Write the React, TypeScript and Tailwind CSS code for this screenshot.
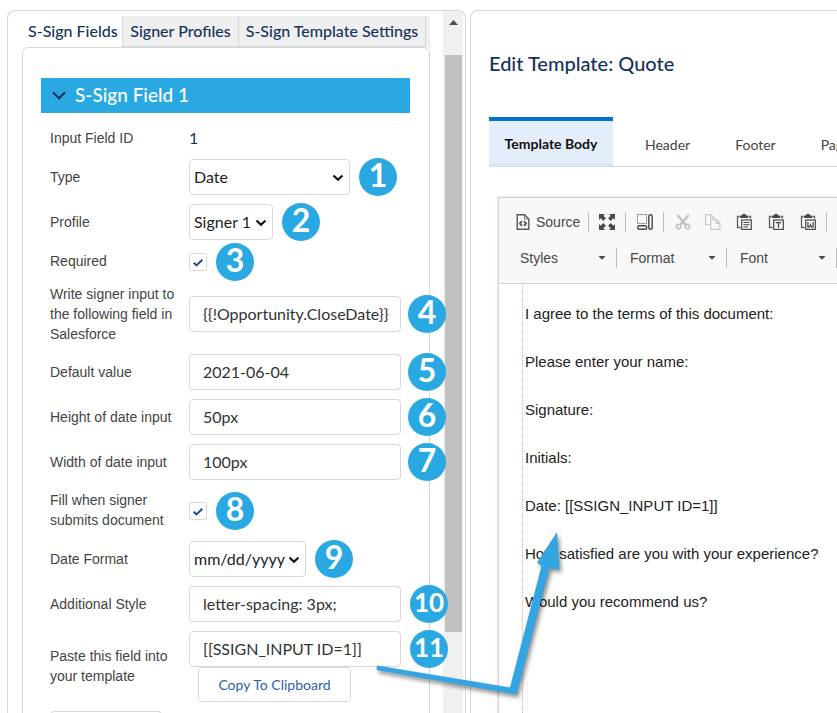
import type { ReactNode } from "react";

const labelFont = "font-['Liberation_Sans',Arial,sans-serif]";

const templateLines = [
  "I agree to the terms of this document:",
  "Please enter your name:",
  "Signature:",
  "Initials:",
  "Date: [[SSIGN_INPUT ID=1]]",
  "How satisfied are you with your experience?",
  "Would you recommend us?",
];

interface RowProps {
  label: string;
  htmlFor?: string;
  className?: string;
  children: ReactNode;
}

function Row({ label, htmlFor, className = "h-9", children }: RowProps) {
  return (
    <div className={`flex items-center ${className}`}>
      <label htmlFor={htmlFor} className={`w-[139px] shrink-0 pb-px pr-2 text-sm leading-5 text-[#444] ${labelFont}`}>
        {label}
      </label>
      {children}
    </div>
  );
}

function Badge({ n, near = false }: { n: number; near?: boolean }) {
  return (
    <span
      className={`absolute left-full top-1/2 z-10 flex size-[38px] -translate-y-1/2 items-center justify-center rounded-full bg-[#29a8e2] pb-1 font-bold leading-none text-white ${
        near ? "ml-[7px]" : "ml-[9px]"
      } ${n > 9 ? "text-[26px]" : "text-[32px]"}`}
    >
      {n}
    </span>
  );
}

function TextField({ id, value, badge }: { id: string; value: string; badge: number }) {
  return (
    <div className="relative w-[212px]">
      <input
        id={id}
        type="text"
        defaultValue={value}
        className="h-9 w-full rounded border border-[#d8d8d8] bg-white pb-0.5 pl-[13px] pr-2 text-base text-[#333] outline-none"
      />
      <Badge n={badge} near={badge < 10} />
    </div>
  );
}

function SelectField({ id, value, badge, width }: { id: string; value: string; badge: number; width: string }) {
  return (
    <div className={`relative ${width}`}>
      <select
        id={id}
        className="h-9 w-full appearance-none rounded border border-[#d8d8d8] bg-white pl-1 text-base text-[#222] outline-none"
      >
        <option>{value}</option>
      </select>
      <svg viewBox="0 0 12 8" className="pointer-events-none absolute right-[6px] top-[15px] h-2 w-3">
        <path d="M1.5 1.5 6 5.7l4.500-4.200" fill="none" stroke="#111" strokeWidth="2.200" />
      </svg>
      <Badge n={badge} />
    </div>
  );
}

function CheckField({ id, badge }: { id: string; badge: number }) {
  return (
    <div className="relative size-[18px]">
      <input
        id={id}
        type="checkbox"
        defaultChecked
        className="block size-[18px] appearance-none rounded-xs border border-[#d8d8d8] bg-white"
      />
      <svg viewBox="0 0 18 18" className="pointer-events-none absolute inset-0">
        <path d="m4.800 9.700 2.700 2.700 5.800-5.600" fill="none" stroke="#1b4f9c" strokeWidth="2.100" />
      </svg>
      <Badge n={badge} />
    </div>
  );
}

function Separator() {
  return <span className="h-5 w-px shrink-0 bg-[#bcbcbc]" />;
}

function ToolButton({ label, className, children }: { label: string; className: string; children: ReactNode }) {
  return (
    <button aria-label={label} className={`flex shrink-0 justify-center ${className}`}>
      <svg viewBox="0 0 16 16" className="size-4" fill="none" stroke="#484848">
        {children}
      </svg>
    </button>
  );
}

function Clipboard() {
  return (
    <>
      <path d="M3.500 2.500h-2v11h3M12.500 2.500h2v2" stroke="#5a5a5a" strokeWidth="1.300" />
      <path d="M4 1.500h2.200V0h3.600v1.500H12V4H4z" fill="#484848" stroke="none" />
      <rect x="5.700" y="6" width="9.600" height="9.400" fill="#f8f8f8" strokeWidth="1.200" />
    </>
  );
}

function Combo({ label }: { label: string }) {
  return (
    <button className="flex w-[109px] shrink-0 items-center justify-between pl-[13px] pr-[10px] text-sm text-[#484848]">
      {label}
      <svg viewBox="0 0 8 4" className="h-1 w-2">
        <path d="M.5 0h7L4 3.800z" fill="#484848" />
      </svg>
    </button>
  );
}

function Toolbar() {
  return (
    <div className="flex flex-col gap-4 border-b border-[#d1d1d1] bg-[#f8f8f8] pb-[15px] pt-[14px]">
      <div className="flex h-5 items-center">
        <button className="flex w-[89px] shrink-0 items-center gap-[6px] pl-[17px] text-sm text-[#484848]">
          <svg viewBox="0 0 14 16" className="h-4 w-[14px]" fill="none" stroke="#585858">
            <path d="M1.200.700h7.300L12.800 5v10.300H1.200z" strokeWidth="1.400" />
            <path d="M8.500.700V5h4.300" strokeWidth=".8" />
            <path d="M6 7.200 3.900 9.500 6 11.800M8 7.200l2.100 2.300L8 11.800" strokeWidth="1.900" />
          </svg>
          Source
        </button>
        <Separator />
        <ToolButton label="Maximize" className="w-9">
          <path
            d="M0 0h6L4.300 1.700l2.600 2.600-2.600 2.600-2.600-2.600L0 6zM16 0v6l-1.700-1.700-2.600 2.600-2.600-2.600 2.600-2.600L10 0zM0 16v-6l1.700 1.700 2.600-2.600 2.600 2.600-2.600 2.600L6 16zM16 16h-6l1.700-1.700-2.600-2.600 2.600-2.600 2.600 2.600L16 10z"
            fill="#484848"
            stroke="none"
          />
        </ToolButton>
        <Separator />
        <ToolButton label="Show Blocks" className="w-[37px]">
          <path d="M.500 9.500v-9h9v9z" strokeDasharray="1 1" />
          <rect x="11.800" y=".7" width="3.400" height="14.600" rx="1.500" strokeWidth="1.400" />
          <rect x=".7" y="11.800" width="9" height="3.400" rx="1.500" strokeWidth="1.400" />
        </ToolButton>
        <Separator />
        <ToolButton label="Cut" className="w-[38px]">
          <g stroke="#c4c4c4">
            <path d="m2.300 1 8.500 10M13.700 1 5.200 11" strokeWidth="2.600" />
            <circle cx="3.600" cy="12.600" r="2.200" strokeWidth="1.700" />
            <circle cx="12.400" cy="12.600" r="2.200" strokeWidth="1.700" />
          </g>
        </ToolButton>
        <ToolButton label="Copy" className="w-[22px]">
          <g stroke="#c8c8c8" strokeWidth="1.200">
            <path d="M5 10.500H.600V.600h5.200L9 3.800V5" />
            <path d="M5.800.600V4H9" />
            <path d="M5.600 5.600h5.800l3.500 3.500v6.300H5.600z" fill="#f8f8f8" />
            <path d="M11.200 5.600v3.700h3.700" />
          </g>
        </ToolButton>
        <div className="flex pl-1">
          <ToolButton label="Paste" className="w-8">
            <Clipboard />
            <path d="M7.500 8.500h6M7.500 10.700h6M7.500 12.900h4.500" />
          </ToolButton>
          <ToolButton label="Paste as plain text" className="w-8">
            <Clipboard />
            <path d="M7.800 8.700h5.400M10.500 8.700v5" strokeWidth="1.300" />
          </ToolButton>
          <ToolButton label="Paste from Word" className="w-8">
            <Clipboard />
            <path d="M7.900 8v5.200h1.300l1.300-2 1.300 2h1.300V8M10.500 9.500v2" strokeWidth="1.200" />
          </ToolButton>
        </div>
        <div className="flex pl-[2px]">
          <Separator />
        </div>
      </div>
      <div className="flex h-5 items-center pl-2">
        <Combo label="Styles" />
        <Separator />
        <Combo label="Format" />
        <Separator />
        <Combo label="Font" />
        <Separator />
      </div>
    </div>
  );
}

function FieldsPanel() {
  return (
    <section className="flex w-[459px] shrink-0 overflow-hidden rounded-t-lg border border-b-0 border-[#d4d8d8] bg-white">
      <div className="flex-1 pl-[14px] pr-[13px] pt-[5px]">
        <div role="tablist" className="flex h-[31px] bg-[#efefef] text-base font-medium text-[#16325c]">
          <button role="tab" aria-selected="true" className="w-[101px] whitespace-nowrap border-r border-[#d4d8d8] bg-white pb-0.5 pl-[6px] text-left">
            S-Sign Fields
          </button>
          <button role="tab" className="w-[116px] whitespace-nowrap border-b border-r border-[#d4d8d8] pb-px">Signer Profiles</button>
          <button role="tab" className="w-[187px] whitespace-nowrap border-b border-r border-[#d4d8d8] pb-px">S-Sign Template Settings</button>
        </div>
        <div className="h-full rounded-t-md border border-[#d4d8d8] pl-[18px] pr-[19px] pt-[30px]">
          <button className="flex h-[35px] w-full items-center gap-[9px] bg-[#29a8e2] pl-[11px] text-[19px] font-medium text-white">
            <svg viewBox="0 0 14 9" className="h-[9px] w-[14px]">
              <path d="m1 1.300 6 6 6-6" fill="none" stroke="#16325c" strokeWidth="2.200" />
            </svg>
            S-Sign Field 1
          </button>
          <div className="flex flex-col gap-[9px] pl-[9px] pt-[13px]">
            <Row label="Input Field ID" className="h-6">
              <span className="text-base text-[#16325c]">1</span>
            </Row>
            <Row label="Type" htmlFor="type">
              <SelectField id="type" value="Date" badge={1} width="w-[161px]" />
            </Row>
            <Row label="Profile" htmlFor="profile">
              <SelectField id="profile" value="Signer 1" badge={2} width="w-[84px]" />
            </Row>
            <Row label="Required" htmlFor="required" className="h-[25px]">
              <CheckField id="required" badge={3} />
            </Row>
            <Row label="Write signer input to the following field in Salesforce" htmlFor="target" className="h-[62px]">
              <TextField id="target" value="{{!Opportunity.CloseDate}}" badge={4} />
            </Row>
            <Row label="Default value" htmlFor="default">
              <TextField id="default" value="2021-06-04" badge={5} />
            </Row>
            <Row label="Height of date input" htmlFor="height">
              <TextField id="height" value="50px" badge={6} />
            </Row>
            <Row label="Width of date input" htmlFor="width">
              <TextField id="width" value="100px" badge={7} />
            </Row>
            <Row label="Fill when signer submits document" htmlFor="fill" className="h-[43px]">
              <CheckField id="fill" badge={8} />
            </Row>
            <Row label="Date Format" htmlFor="format">
              <SelectField id="format" value="mm/dd/yyyy" badge={9} width="w-[117px]" />
            </Row>
            <Row label="Additional Style" htmlFor="style">
              <TextField id="style" value="letter-spacing: 3px;" badge={10} />
            </Row>
            <Row label="Paste this field into your template" htmlFor="tag" className="h-[71px]">
              <div>
                <TextField id="tag" value="[[SSIGN_INPUT ID=1]]" badge={11} />
                <button className="ml-[9px] block h-[35px] w-[153px] rounded border border-[#d8d8d8] bg-white text-sm text-[#2a62ad]">
                  Copy To Clipboard
                </button>
              </div>
            </Row>
            <div className="h-9 w-28 rounded border border-[#d8d8d8]" />
          </div>
        </div>
      </div>
      <div className="mr-[2px] w-5 shrink-0 bg-[#f0f0f0]">
        <svg viewBox="0 0 20 44" className="h-11 w-5">
          <path d="m6 14 4.500-5 4.500 5z" fill="#4f4f4f" />
        </svg>
        <div className="ml-[2px] h-[577px] w-[17px] bg-[#c1c1c1]" />
      </div>
    </section>
  );
}

function EditorPanel() {
  return (
    <section className="min-w-0 flex-1 overflow-hidden rounded-tl-lg border-l border-t border-[#d4d8d8] bg-white pl-[18px] pt-10">
      <h1 className="whitespace-nowrap text-xl font-medium leading-6 text-[#16325c]">Edit Template: Quote</h1>
      <div role="tablist" className="mt-[42px] flex h-[50px] border-b border-[#d8d8d8] text-sm text-[#444]">
        <button role="tab" aria-selected="true" className="w-[124px] shrink-0 border-t-4 border-[#0070d2] bg-[#e4eefb] font-bold text-[#111]">
          <span className="flex h-[43px] items-center justify-center border-b border-[#c9e0f7] pt-0.5">Template Body</span>
        </button>
        <button role="tab" className="shrink-0 pl-8 pr-[22px] pt-1.5">Header</button>
        <button role="tab" className="shrink-0 px-[23px] pt-1.5">Footer</button>
        <button role="tab" className="shrink-0 px-[22px] pt-1.5">Page</button>
      </div>
      <div className={`ml-[9px] mt-[30px] h-full border-l border-t border-[#d1d1d1] shadow-[0_0_3px_rgba(0,0,0,0.15)] ${labelFont}`}>
        <Toolbar />
        <div className="ml-[23px] h-full whitespace-nowrap border-l border-dotted border-[#bbb] pl-[2px] pt-[18px] text-[15px] leading-6 text-[#222]">
          {templateLines.map((line) => (
            <p key={line} className="mb-6">{line}</p>
          ))}
        </div>
      </div>
    </section>
  );
}

export default function App() {
  return (
    <main className="relative flex h-screen gap-1 overflow-hidden bg-white pl-[7px] pt-[10px] font-[Lato,sans-serif]">
      <FieldsPanel />
      <EditorPanel />
      {/* arrow from the field tag to its place in the template */}
      <svg
        viewBox="0 0 200 180"
        className="pointer-events-none absolute left-[370px] top-[525px] z-20 h-[180px] w-[200px] drop-shadow-[2px_3px_2px_rgba(0,0,0,0.45)]"
      >
        <path d="M7 140.500 140 162.500 171.500 41 167 37.500 187 7 189.500 44.500 179.500 43 146.500 169.500 6.500 145z" fill="#34a5e3" />
      </svg>
    </main>
  );
}
